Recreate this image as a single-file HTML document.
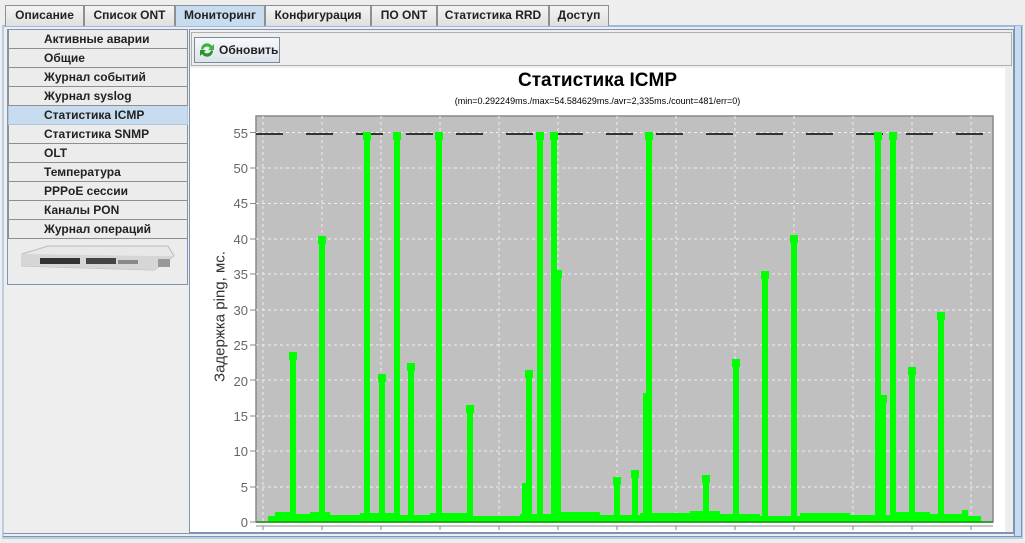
<!DOCTYPE html>
<html><head><meta charset="utf-8"><style>
*{box-sizing:border-box;margin:0;padding:0}
body{width:1025px;height:543px;background:#eeeeee;font-family:"Liberation Sans",sans-serif;font-size:12px;position:relative;overflow:hidden;color:#000}
.tab{position:absolute;top:5px;height:21px;border:1px solid #8e8f8f;border-bottom:none;background:linear-gradient(#f4f4f4,#e0e0e0);font-weight:bold;font-size:12px;line-height:19px;text-align:center;color:#222}
.tab.sel{background:#c8dcf0;top:5px}
.frame{position:absolute;left:2px;top:25px;width:1021px;height:514px;border:2px solid #b8cfe5;border-top:2px solid #9fb9d6}
.item{position:absolute;left:8px;width:180px;height:19px;border:1px solid #8e8f8f;border-top:none;background:#ececec;font-weight:bold;font-size:12px;line-height:18px;padding-left:35px;color:#222}
.item.sel{background:#c8dcf0;border-color:#b0c4de}
</style></head><body>
<div class="frame"></div>
<div style="position:absolute;left:3px;top:533px;width:1019px;height:4px;border-top:1px solid #7e94b2;border-bottom:1px solid #7e94b2"></div>
<div style="position:absolute;left:1014px;top:26px;width:8px;height:510px;border-left:1px solid #7e94b2;border-right:1px solid #7e94b2;background:#c8dcf0"></div>

<div class="tab" style="left:5px;width:79px">Описание</div>
<div class="tab" style="left:84px;width:91px">Список ONT</div>
<div class="tab sel" style="left:175px;width:90px">Мониторинг</div>
<div class="tab" style="left:265px;width:106px">Конфигурация</div>
<div class="tab" style="left:371px;width:66px">ПО ONT</div>
<div class="tab" style="left:437px;width:112px">Статистика RRD</div>
<div class="tab" style="left:549px;width:60px">Доступ</div>

<div style="position:absolute;left:7px;top:29px;width:181px;height:256px;border:1px solid #7e94b2;background:#ececec"></div>
<div class="item" style="top:30px">Активные аварии</div>
<div class="item" style="top:49px">Общие</div>
<div class="item" style="top:68px">Журнал событий</div>
<div class="item" style="top:87px">Журнал syslog</div>
<div class="item sel" style="top:106px">Статистика ICMP</div>
<div class="item" style="top:125px">Статистика SNMP</div>
<div class="item" style="top:144px">OLT</div>
<div class="item" style="top:163px">Температура</div>
<div class="item" style="top:182px">PPPoE сессии</div>
<div class="item" style="top:201px">Каналы PON</div>
<div class="item" style="top:220px">Журнал операций</div>
<svg style="position:absolute;left:18px;top:244px" width="160" height="30">
<polygon points="4,10 30,2 150,2 156,12 136,26 4,22" fill="#e8e8e8" stroke="#bbb"/>
<polygon points="4,10 136,12 156,12 136,26 4,22" fill="#d6d6d6"/>
<rect x="22" y="14" width="40" height="6" fill="#333"/><rect x="68" y="14" width="30" height="6" fill="#444"/>
<rect x="100" y="16" width="20" height="4" fill="#888"/><rect x="140" y="15" width="12" height="8" fill="#999"/>
</svg>

<div style="position:absolute;left:189px;top:29px;width:825px;height:504px;border:1px solid #7e94b2;background:#eeeeee"></div>
<div style="position:absolute;left:191px;top:32px;width:821px;height:34px;border:1px solid #b0b0b0;background:#eeeeee"></div>
<div style="position:absolute;left:194px;top:37px;width:86px;height:26px;border:1px solid #7a8a99;background:linear-gradient(#f6f9fc,#dde3ea);font-size:12px;font-weight:bold;line-height:24px;padding-left:24px;color:#222">Обновить</div>
<svg style="position:absolute;left:198px;top:41px" width="18" height="18" viewBox="0 0 18 18">
<path d="M3 8 A6 6 0 0 1 14 5 L16 3 L16 9 L10 9 L12 7 A4 4 0 0 0 5 9 Z" fill="#3cb43c"/>
<path d="M15 10 A6 6 0 0 1 4 13 L2 15 L2 9 L8 9 L6 11 A4 4 0 0 0 13 9 Z" fill="#2a942a"/>
</svg>

<div style="position:absolute;left:190px;top:68px;width:815px;height:464px;background:#fff"></div>
<div style="position:absolute;left:190px;top:70px;width:815px;text-align:center;font-weight:bold;font-size:19px">Статистика ICMP</div>
<div style="position:absolute;left:190px;top:96px;width:815px;text-align:center;font-size:9px">(min=0.292249ms./max=54.584629ms./avr=2,335ms./count=481/err=0)</div>
<div style="position:absolute;left:120px;top:308px;width:200px;text-align:center;font-size:15px;color:#333;transform:rotate(-90deg)">Задержка ping, мс.</div>

<svg style="position:absolute;left:0;top:0" width="1025" height="543">
<rect x="256" y="116" width="737" height="406" fill="#c0c0c0" stroke="#888" stroke-width="1.5"/>
<g stroke="#eee" stroke-dasharray="3,3" stroke-width="1">
<line x1="263" y1="116" x2="263" y2="522"/><line x1="322" y1="116" x2="322" y2="522"/><line x1="381" y1="116" x2="381" y2="522"/><line x1="440" y1="116" x2="440" y2="522"/><line x1="499" y1="116" x2="499" y2="522"/><line x1="558" y1="116" x2="558" y2="522"/><line x1="617" y1="116" x2="617" y2="522"/><line x1="676" y1="116" x2="676" y2="522"/><line x1="735" y1="116" x2="735" y2="522"/><line x1="794" y1="116" x2="794" y2="522"/><line x1="853" y1="116" x2="853" y2="522"/><line x1="912" y1="116" x2="912" y2="522"/><line x1="971" y1="116" x2="971" y2="522"/>
<line x1="256" y1="132.5" x2="993" y2="132.5"/><line x1="256" y1="168" x2="993" y2="168"/><line x1="256" y1="203.5" x2="993" y2="203.5"/><line x1="256" y1="239" x2="993" y2="239"/><line x1="256" y1="274" x2="993" y2="274"/><line x1="256" y1="310" x2="993" y2="310"/><line x1="256" y1="345" x2="993" y2="345"/><line x1="256" y1="380" x2="993" y2="380"/><line x1="256" y1="416" x2="993" y2="416"/><line x1="256" y1="451" x2="993" y2="451"/><line x1="256" y1="487" x2="993" y2="487"/>
</g>
<line x1="256" y1="134" x2="993" y2="134" stroke="#333" stroke-width="2" stroke-dasharray="27,23"/>
<g fill="#666" font-size="13" text-anchor="end" font-family="Liberation Sans">
<text x="248" y="138">55</text><text x="248" y="173">50</text><text x="248" y="208">45</text><text x="248" y="244">40</text><text x="248" y="279">35</text><text x="248" y="315">30</text><text x="248" y="350">25</text><text x="248" y="386">20</text><text x="248" y="421">15</text><text x="248" y="456">10</text><text x="248" y="492">5</text><text x="248" y="527">0</text>
</g>
<g stroke="#888"><line x1="250" y1="522" x2="256" y2="522"/><line x1="250" y1="487" x2="256" y2="487"/><line x1="250" y1="451" x2="256" y2="451"/><line x1="250" y1="416" x2="256" y2="416"/><line x1="250" y1="380" x2="256" y2="380"/><line x1="250" y1="345" x2="256" y2="345"/><line x1="250" y1="310" x2="256" y2="310"/><line x1="250" y1="274" x2="256" y2="274"/><line x1="250" y1="239" x2="256" y2="239"/><line x1="250" y1="203.5" x2="256" y2="203.5"/><line x1="250" y1="168" x2="256" y2="168"/><line x1="250" y1="132.5" x2="256" y2="132.5"/></g>
<line x1="256" y1="526" x2="993" y2="526" stroke="#888"/>
<g stroke="#888"><line x1="263" y1="526" x2="263" y2="530"/><line x1="322" y1="526" x2="322" y2="530"/><line x1="381" y1="526" x2="381" y2="530"/><line x1="440" y1="526" x2="440" y2="530"/><line x1="499" y1="526" x2="499" y2="530"/><line x1="558" y1="526" x2="558" y2="530"/><line x1="617" y1="526" x2="617" y2="530"/><line x1="676" y1="526" x2="676" y2="530"/><line x1="735" y1="526" x2="735" y2="530"/><line x1="794" y1="526" x2="794" y2="530"/><line x1="853" y1="526" x2="853" y2="530"/><line x1="912" y1="526" x2="912" y2="530"/><line x1="971" y1="526" x2="971" y2="530"/></g>
<g fill="#00ff00">
<polygon points="268,522 268,516 275,516 275,512 290,512 290,514 310,514 310,512 330,512 330,515 360,515 360,513 400,513 400,515 430,515 430,513 470,513 470,516 520,516 520,514 560,514 560,512 600,512 600,515 640,515 640,513 690,513 690,511 720,511 720,514 760,514 760,516 800,516 800,513 850,513 850,515 890,515 890,512 930,512 930,514 962,514 962,510 968,510 968,516 981,516 981,522"/>
<rect x="290" y="355" width="6" height="167"/><rect x="289" y="352" width="8" height="8"/>
<rect x="319" y="239" width="6" height="283"/><rect x="318" y="236" width="8" height="8"/>
<rect x="364" y="135" width="6" height="387"/><rect x="363" y="132" width="8" height="8"/>
<rect x="379" y="377" width="6" height="145"/><rect x="378" y="374" width="8" height="8"/>
<rect x="394" y="135" width="6" height="387"/><rect x="393" y="132" width="8" height="8"/>
<rect x="408" y="366" width="6" height="156"/><rect x="407" y="363" width="8" height="8"/>
<rect x="436" y="135" width="6" height="387"/><rect x="435" y="132" width="8" height="8"/>
<rect x="467" y="408" width="6" height="114"/><rect x="466" y="405" width="8" height="8"/>
<rect x="522" y="483" width="5" height="39"/>
<rect x="526" y="373" width="6" height="149"/><rect x="525" y="370" width="8" height="8"/>
<rect x="537" y="135" width="6" height="387"/><rect x="536" y="132" width="8" height="8"/>
<rect x="551" y="135" width="6" height="387"/><rect x="550" y="132" width="8" height="8"/>
<rect x="555" y="273" width="6" height="249"/><rect x="554" y="270" width="8" height="8"/>
<rect x="614" y="480" width="6" height="42"/><rect x="613" y="477" width="8" height="8"/>
<rect x="632" y="473" width="6" height="49"/><rect x="631" y="470" width="8" height="8"/>
<rect x="643" y="393" width="5" height="129"/>
<rect x="646" y="135" width="6" height="387"/><rect x="645" y="132" width="8" height="8"/>
<rect x="703" y="478" width="6" height="44"/><rect x="702" y="475" width="8" height="8"/>
<rect x="733" y="362" width="6" height="160"/><rect x="732" y="359" width="8" height="8"/>
<rect x="762" y="274" width="6" height="248"/><rect x="761" y="271" width="8" height="8"/>
<rect x="791" y="238" width="6" height="284"/><rect x="790" y="235" width="8" height="8"/>
<rect x="875" y="135" width="6" height="387"/><rect x="874" y="132" width="8" height="8"/>
<rect x="880" y="398" width="6" height="124"/><rect x="879" y="395" width="8" height="8"/>
<rect x="890" y="135" width="6" height="387"/><rect x="889" y="132" width="8" height="8"/>
<rect x="909" y="370" width="6" height="152"/><rect x="908" y="367" width="8" height="8"/>
<rect x="938" y="315" width="6" height="207"/><rect x="937" y="312" width="8" height="8"/>
</g>
<line x1="256" y1="522" x2="993" y2="522" stroke="#119911" stroke-width="1.5"/>
</svg>
</body></html>
